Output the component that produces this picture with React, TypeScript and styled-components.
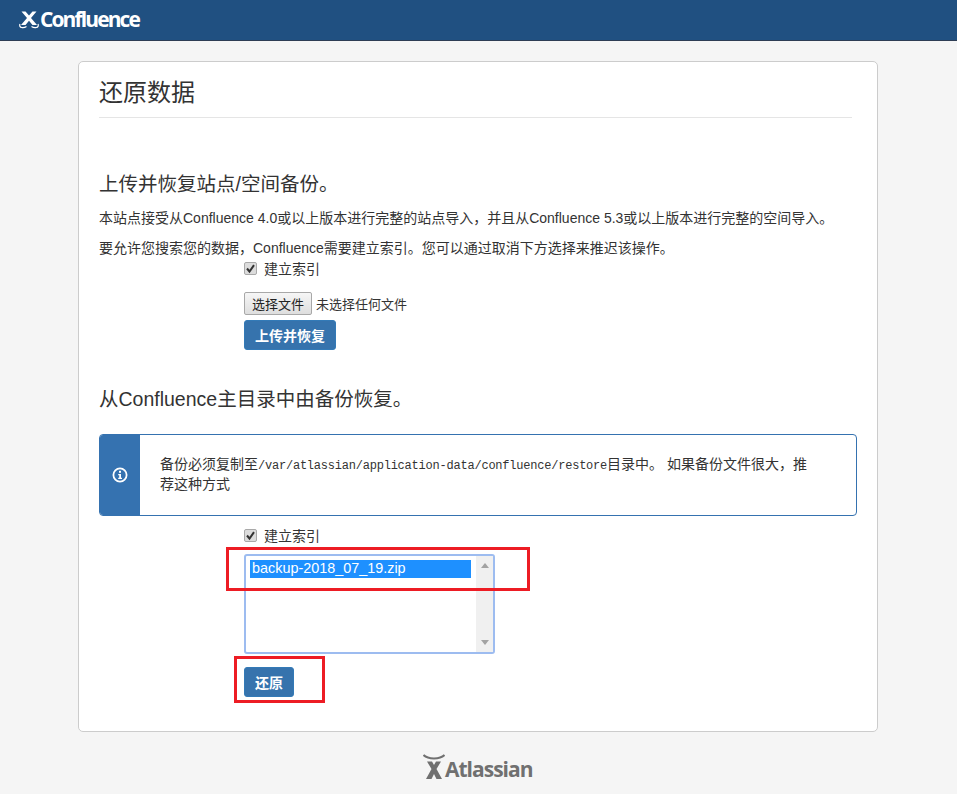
import React from "react";
import styled, { createGlobalStyle } from "styled-components";

const Global = createGlobalStyle`
  html, body { margin: 0; padding: 0; background: #f5f5f5; }
  body { font-family: "Liberation Sans", "Noto Sans CJK SC", sans-serif; color: #333; font-size: 14px; }
  * { box-sizing: border-box; }
`;

const Page = styled.div`
  width: 957px; height: 794px; overflow: hidden; display: flex; flex-direction: column; align-items: flex-start;
`;
const Header = styled.header`
  width: 100%; height: 41px; flex: none; background: #205081; border-bottom: 1px solid #2e3d54;
  display: flex; align-items: center; padding-left: 19px; color: #fff;
`;
const Brand = styled.span`
  font-family: "Open Sans", sans-serif; font-weight: 700; font-size: 21px; letter-spacing: -1.9px; line-height: 1; margin-left: 1px; margin-top: -1px;
`;
const Card = styled.main`
  width: 800px; height: 671px; flex: none; margin: 20px 0 0 78px; background: #fff; border: 1px solid #ccc; border-radius: 5px;
  padding: 0 25px 0 20px;
`;
const Title = styled.h1`
  margin: 0; height: 56px; padding-top: 13px; font-size: 24px; font-weight: 400; line-height: 36px; color: #333; border-bottom: 1px solid #e5e5e5;
`;
const Heading = styled.h2<{ $top: number }>`
  margin: ${p => p.$top}px 0 0; font-size: 19.5px; font-weight: 400; line-height: 28px; color: #333;
`;
const Para = styled.p<{ $top: number }>`
  margin: ${p => p.$top}px 0 0; font-size: 14px; line-height: 20px; color: #333; white-space: nowrap;
`;
const Form = styled.div<{ $top: number }>`
  margin: ${p => p.$top}px 0 0 145px; position: relative;
`;
const CheckRow = styled.label`
  display: flex; align-items: center; gap: 7px; height: 20px; font-size: 14px;
`;
const CheckBox = styled.span`
  width: 13px; height: 13px; flex: none; display: flex; align-items: center; justify-content: center;
  background: #dcdcdc; border: 1px solid #a9a9a9; border-radius: 2px;
`;
const FileRow = styled.div`
  display: flex; align-items: center; gap: 4px; margin-top: 13px; height: 24px; font-size: 13px;
`;
const FileButton = styled.button`
  height: 23px; width: 68px; padding: 0; font: inherit; color: #222; background: linear-gradient(#f6f6f6, #dedede);
  border: 1px solid #a8a8a8; border-radius: 2px;
`;
const Primary = styled.button<{ $width: number; $top: number }>`
  display: block; width: ${p => p.$width}px; height: 30px; margin-top: ${p => p.$top}px; padding: 0; border: 1px solid #337ab7; border-radius: 3px;
  background: #3673ad; color: #fff; font-family: inherit; font-size: 14px; font-weight: 700;
`;
const Alert = styled.div`
  width: 758px; height: 82px; margin-top: 21px; display: flex; border: 1px solid #3572b0; border-radius: 4px; background: #fff; overflow: hidden;
`;
const AlertSide = styled.div`
  width: 40px; flex: none; background: #3572b0; display: flex; align-items: center; justify-content: center; color: #fff;
`;
const AlertBody = styled.div`
  padding: 19px 40px 0 20px; font-size: 14px; line-height: 20px; color: #333;
`;
const Mono = styled.span`
  font-family: "Liberation Mono", monospace; font-size: 12px; letter-spacing: -0.22px; line-height: 1;
`;
const ListBox = styled.div`
  width: 251px; height: 100px; margin-top: 9px; border: 2px solid #9dbcf0; border-radius: 3px; padding: 4px;
  background: #fff; position: relative;
`;
const Option = styled.div`
  width: 221px; height: 18px; background: #1e90ff; color: #fff; font-size: 14.4px; line-height: 17px; padding-left: 2px; white-space: nowrap;
`;
const Scroll = styled.div`
  position: absolute; top: 0; right: 0; bottom: 0; width: 17px; background: #f0f0f0; display: flex; flex-direction: column; justify-content: space-between; align-items: center; padding: 7px 0;
`;
const Arrow = styled.span<{ $up?: boolean }>`
  width: 0; height: 0; border-left: 4px solid transparent; border-right: 4px solid transparent;
  ${p => p.$up ? "border-bottom: 5px solid #a3a3a3;" : "border-top: 5px solid #a3a3a3;"}
`;
const Mark = styled.div<{ $l: number; $t: number; $w: number; $h: number }>`
  position: absolute; left: ${p => p.$l}px; top: ${p => p.$t}px; width: ${p => p.$w}px; height: ${p => p.$h}px; border: 3px solid #ed1c24; pointer-events: none;
`;
const Footer = styled.footer`
  margin: 20px 0 0 423px; height: 28px; display: flex; align-items: flex-end; color: #707070;
`;
const FootText = styled.span`
  font-family: "Open Sans", sans-serif; font-weight: 700; font-size: 21px; letter-spacing: -1px; line-height: 1;
`;

const ConfluenceMark = () => (
  <svg width="20" height="18" viewBox="0 0 20 18" fill="none" style={{ flex: "none" }}>
    <path d="M2.5 0.5 H6.5 L10 4.5 L13.5 0.5 H17.5 L12 7 L18 14 H13.5 L10 9.8 L6.5 14 H2 L8 7Z" fill="#fff" />
    <path d="M1 13 C-0.5 17 4.5 17.5 7.5 15.5 M19 13 C20.5 17 15.5 17.5 12.5 15.5" stroke="#fff" strokeWidth="1.2" />
  </svg>
);

const AtlassianMark = () => (
  <svg width="22" height="26" viewBox="0 0 22 26" fill="none" style={{ flex: "none" }}>
    <path d="M0.5 1 C5 5.5 17 5.5 21.5 1" stroke="#707070" strokeWidth="2" />
    <path d="M4 7.5 H9 L11 11 L13 7.5 H18 L13.5 15 L19 25 H13.5 L11 20 L8.5 25 H3 L8.5 15Z" fill="#707070" />
  </svg>
);

const Tick = () => (
  <CheckBox>
    <svg width="11" height="11" viewBox="0 0 11 11" fill="none">
      <path d="M2 5.5 L4.5 8.5 L9 2.2" stroke="#333" strokeWidth="2" />
    </svg>
  </CheckBox>
);

export default function App() {
  return (
    <Page>
      <Global />
      <Header>
        <ConfluenceMark />
        <Brand>Confluence</Brand>
      </Header>
      <Card>
        <Title>还原数据</Title>
        <Heading $top={52}>上传并恢复站点/空间备份。</Heading>
        <Para $top={10}>本站点接受从Confluence 4.0或以上版本进行完整的站点导入，并且从Confluence 5.3或以上版本进行完整的空间导入。</Para>
        <Para $top={10}>要允许您搜索您的数据，Confluence需要建立索引。您可以通过取消下方选择来推迟该操作。</Para>
        <Form $top={0}>
          <CheckRow><Tick />建立索引</CheckRow>
          <FileRow><FileButton>选择文件</FileButton>未选择任何文件</FileRow>
          <Primary $width={92} $top={5}>上传并恢复</Primary>
        </Form>
        <Heading $top={35}>从Confluence主目录中由备份恢复。</Heading>
        <Alert>
          <AlertSide>
            <svg width="16" height="16" viewBox="0 0 16 16" fill="none">
              <circle cx="8" cy="8" r="6.6" stroke="#fff" strokeWidth="1.8" />
              <rect x="7" y="3.8" width="2" height="2" fill="#fff" />
              <path d="M6.2 7H9V10.8H10V12H6.2V10.8H7.2V8.2H6.2Z" fill="#fff" />
            </svg>
          </AlertSide>
          <AlertBody>备份必须复制至<Mono>/var/atlassian/application-data/confluence/restore</Mono>目录中。 如果备份文件很大，推荐这种方式</AlertBody>
        </Alert>
        <Form $top={9}>
          <CheckRow><Tick />建立索引</CheckRow>
          <ListBox>
            <Option>backup-2018_07_19.zip</Option>
            <Scroll><Arrow $up /><Arrow /></Scroll>
          </ListBox>
          <Primary $width={50} $top={13}>还原</Primary>
          <Mark $l={-18} $t={22} $w={304} $h={44} />
          <Mark $l={-10} $t={131} $w={91} $h={47} />
        </Form>
      </Card>
      <Footer>
        <AtlassianMark />
        <FootText>Atlassian</FootText>
      </Footer>
    </Page>
  );
}
